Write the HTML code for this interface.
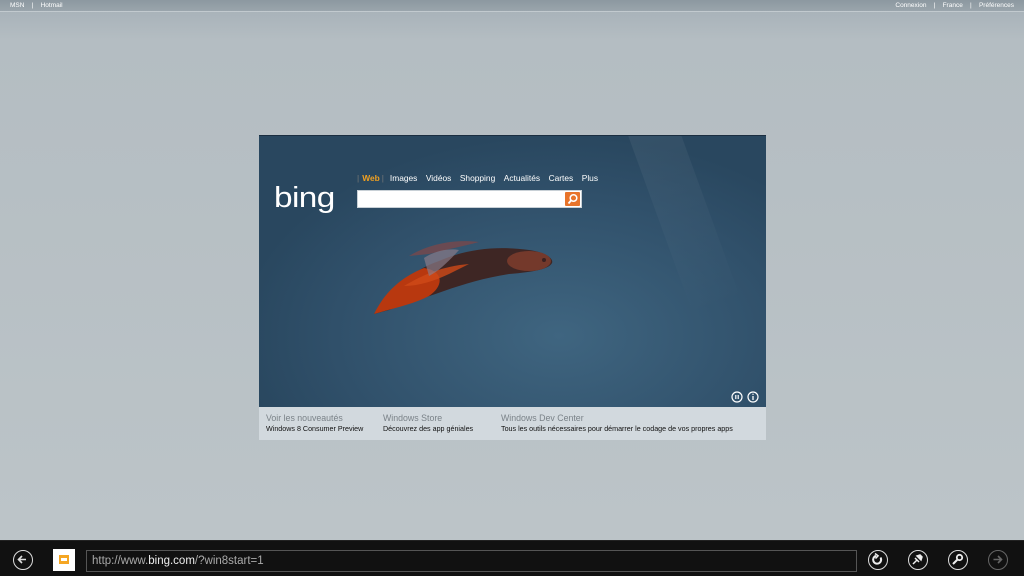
<!DOCTYPE html>
<html><head><meta charset="utf-8"><style>
*{margin:0;padding:0;box-sizing:border-box}
body{width:1024px;height:576px;overflow:hidden;background:linear-gradient(#a9b3ba 12px,#b4bdc2 40px,#bcc4c8 540px);font-family:"Liberation Sans",sans-serif;position:relative}
.top{position:absolute;left:0;top:0;width:1024px;height:12px;background:linear-gradient(#8c98a0,#9aa5ac);border-bottom:1px solid #c2cacf;color:#fff;font-size:6.5px;line-height:12px}
.top .l{position:absolute;left:10px}.top .r{position:absolute;right:10px}
.frame{position:absolute;left:259px;top:135px;width:507px;height:272px;background:radial-gradient(ellipse 320px 200px at 300px 200px,#3f6580,#30506a 70%,#29475f);border-top:1px solid #1b2e40;overflow:hidden}
.ray{position:absolute;left:400px;top:-20px;width:50px;height:200px;background:linear-gradient(rgba(255,255,255,.06),rgba(255,255,255,0));transform:rotate(-20deg)}
.nav{position:absolute;left:98px;top:37px;color:#fff;font-size:8.4px;white-space:nowrap}
.nav span{margin-right:8.5px}
.box{position:absolute;left:98px;top:54px;width:225px;height:18px;background:#fff;border:1px solid #c8d0d6}
.btn{position:absolute;right:1px;top:1px;width:15px;height:14px;background:#e8742a;border-radius:1px}
.bing{position:absolute;left:15px;top:46px;color:#fff;font-size:29px;letter-spacing:-0.5px;transform:scaleX(1.15);transform-origin:left}
.foot{position:absolute;left:259px;top:407px;width:507px;height:33px;background:#d2d9de;font-size:7.15px;color:#111}
.foot div{position:absolute;top:6px;white-space:nowrap}
.foot b{display:block;font-weight:normal;color:#7a8288;font-size:8.8px;margin-bottom:2px}
.bar{position:absolute;left:0;top:540px;width:1024px;height:36px;background:#111;border-top:1px solid #222}
.circ{position:absolute;top:9px;width:20px;height:20px;border:1.6px solid #ddd;border-radius:50%}
.url{position:absolute;left:86px;top:9px;width:771px;height:22px;border:1px solid #555;color:#aaa;font-size:11.5px;line-height:20px;padding-left:5px}
.url span{color:#eee}
</style></head><body>
<div class="top"><span class="l">MSN &nbsp;&nbsp; | &nbsp;&nbsp; Hotmail</span><span class="r">Connexion &nbsp;&nbsp; | &nbsp;&nbsp; France &nbsp;&nbsp; | &nbsp;&nbsp; Préférences</span></div>
<div class="frame">
<div class="ray"></div>
<div class="bing">bing</div>
<div class="nav"><span style="color:#777;margin-right:3px">|</span><span style="color:#f0a020;font-weight:bold;margin-right:2px">Web</span><span style="color:#777;margin-right:6px">|</span><span>Images</span><span>Vidéos</span><span>Shopping</span><span>Actualités</span><span>Cartes</span><span>Plus</span></div>
<div class="box"><div class="btn"><svg width="15" height="14"><circle cx="8.5" cy="6" r="3.3" fill="none" stroke="#fff" stroke-width="1.5"/><path d="M6 8.5L3.5 11.5" stroke="#fff" stroke-width="1.8"/></svg></div></div>
<svg style="position:absolute;left:110px;top:100px" width="190" height="80" viewBox="0 0 190 80">
<path d="M5 78 C20 58 40 35 70 25 C100 12 130 10 160 14 C175 16 185 22 183 27 C180 33 165 36 140 38 C115 42 95 48 75 55 C55 62 35 68 20 74 Z" fill="#3e2624"/>
<path d="M5 78 C15 58 30 42 55 32 C75 35 75 50 60 60 C45 68 25 72 5 78Z" fill="#b8380f"/>
<path d="M35 50 C55 38 75 30 100 28 L80 38 C65 45 50 50 35 50Z" fill="#d04a18" opacity=".8"/>
<path d="M40 20 C60 8 85 3 110 6 C95 10 80 13 60 18Z" fill="#6a4a52"/>
<path d="M55 22 C65 15 80 12 90 14 C80 25 70 35 60 40Z" fill="#8a7a88" opacity=".7"/>
<ellipse cx="160" cy="25" rx="22" ry="10" fill="#74392b"/>
<circle cx="175" cy="24" r="2" fill="#3a2020"/>
</svg>
<svg style="position:absolute;left:472px;top:254px" width="30" height="14"><circle cx="6" cy="7" r="5" fill="none" stroke="#fff" stroke-width="1.2"/><path d="M4.8 5v4M7.2 5v4" stroke="#fff" stroke-width="1.2"/><circle cx="22" cy="7" r="5" fill="none" stroke="#fff" stroke-width="1.2"/><path d="M22 6v4" stroke="#fff" stroke-width="1.3"/><circle cx="22" cy="4.3" r=".7" fill="#fff"/></svg>
</div>
<div class="foot">
<div style="left:7px"><b>Voir les nouveautés</b>Windows 8 Consumer Preview</div>
<div style="left:124px"><b>Windows Store</b>Découvrez des app géniales</div>
<div style="left:242px"><b>Windows Dev Center</b>Tous les outils nécessaires pour démarrer le codage de vos propres apps</div>
</div>
<div class="bar">
<div class="circ" style="left:13px"><svg width="17" height="17"><path d="M12 8.5H5M8 5L4.5 8.5 8 12" fill="none" stroke="#ddd" stroke-width="1.6"/></svg></div>
<div style="position:absolute;left:53px;top:8px;width:22px;height:22px;background:#fff"><svg width="22" height="22"><rect x="6" y="6" width="10" height="9" fill="#f5a623"/><rect x="8" y="9" width="6" height="3" fill="#fff"/></svg></div>
<div class="url">http://www.<span>bing.com</span>/?win8start=1</div>
<div class="circ" style="left:868px"><svg width="17" height="17"><path d="M11.5 6.5A4 4 0 1 1 7 4.8" fill="none" stroke="#eee" stroke-width="2"/><path d="M6 2.5L9 4.8 6.5 7.5" fill="none" stroke="#eee" stroke-width="1.6"/></svg></div>
<div class="circ" style="left:908px"><svg width="17" height="17"><path d="M4 13L7.5 9.5M6 7L10 11M8 5L12 9L13 6L11 4Z" fill="#eee" stroke="#eee" stroke-width="1.5"/></svg></div>
<div class="circ" style="left:948px"><svg width="17" height="17"><path d="M4 13L9 8" stroke="#eee" stroke-width="2"/><circle cx="10.5" cy="6.5" r="2.7" fill="none" stroke="#eee" stroke-width="1.8"/></svg></div>
<div class="circ" style="left:988px;border-color:#666"><svg width="17" height="17"><path d="M4.5 8.5H12M9 5L12.5 8.5 9 12" fill="none" stroke="#666" stroke-width="1.6"/></svg></div>
</div>
</body></html>
